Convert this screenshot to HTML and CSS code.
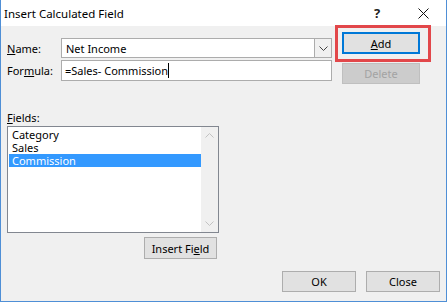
FILE: index.html
```html
<!DOCTYPE html>
<html>
<head>
    <title>Insert Calculated Field</title>
    <link rel="stylesheet" href="styles.css">
</head>
<body>
    <div class="window">
        <div class="titlebar">
            <span class="title">Insert Calculated Field</span>
            <span class="caption-btn help">?</span>
            <span class="caption-btn">
                <svg width="11" height="11" viewBox="0 0 11 11">
                    <path d="M0.5 0.5 L10.5 10.5 M10.5 0.5 L0.5 10.5" stroke="#111" stroke-width="1" fill="none"/>
                </svg>
            </span>
        </div>

        <div class="content">
            <div class="top">
                <div class="fields-col">
                    <div class="row">
                        <label class="label"><u>N</u>ame:</label>
                        <div class="combo">
                            <span class="combo-text">Net Income</span>
                            <span class="combo-btn">
                                <svg width="9" height="5" viewBox="0 0 9 5">
                                    <path d="M0.5 0.5 L4.5 4.5 L8.5 0.5" stroke="#444" fill="none"/>
                                </svg>
                            </span>
                        </div>
                    </div>
                    <div class="row">
                        <label class="label">For<u>m</u>ula:</label>
                        <div class="textbox"><span class="caret">=Sales- Commission</span></div>
                    </div>
                </div>
                <div class="btn-col">
                    <button class="btn default"><u>A</u>dd</button>
                    <button class="btn disabled">Delete</button>
                </div>
            </div>

            <div class="list-section">
                <div class="list-label"><u>F</u>ields:</div>
                <div class="listbox">
                    <ul class="items">
                        <li>Category</li>
                        <li>Sales</li>
                        <li class="selected">Commission</li>
                    </ul>
                    <div class="scrollbar">
                        <svg width="9" height="5" viewBox="0 0 9 5">
                            <path d="M0.5 4.5 L4.5 0.5 L8.5 4.5" stroke="#c2c2c2" fill="none"/>
                        </svg>
                        <svg width="9" height="5" viewBox="0 0 9 5">
                            <path d="M0.5 0.5 L4.5 4.5 L8.5 0.5" stroke="#c2c2c2" fill="none"/>
                        </svg>
                    </div>
                </div>
                <button class="btn insert">Insert Fi<u>e</u>ld</button>
            </div>

            <div class="footer">
                <button class="btn">OK</button>
                <button class="btn">Close</button>
            </div>
        </div>

        <div class="highlight"></div>
    </div>
</body>
</html>
```

FILE: styles.css
```css
body {
  margin: 0;
  font-family: "Noto Sans", "Open Sans", sans-serif;
  font-size: 11px;
  color: #000;
  background: #f0f0f0;
}
.window {
  position: relative;
  width: 447px;
  height: 302px;
  box-sizing: border-box;
  border: 1px solid #4f8fd6;
  border-top: none;
  background: #f0f0f0;
  display: flex;
  flex-direction: column;
}
.titlebar {
  height: 26px;
  background: #fff;
  display: flex;
  align-items: stretch;
  padding-left: 3px;
  font-size: 11.5px;
}
.title {
  flex: 1;
  display: flex;
  align-items: center;
}
.caption-btn {
  width: 46px;
  display: flex;
  align-items: center;
  justify-content: center;
}
.help {
  font-size: 13px;
  font-weight: bold;
  color: #222;
}
.content {
  flex: 1;
  padding: 0 6px;
  display: flex;
  flex-direction: column;
}
.top {
  display: flex;
  align-items: flex-start;
}
.fields-col {
  margin-top: 12px;
  display: flex;
  flex-direction: column;
  gap: 2px;
}
.row {
  display: flex;
  align-items: center;
}
.label {
  width: 54px;
}
.combo {
  width: 271px;
  height: 20px;
  box-sizing: border-box;
  border: 1px solid #acacac;
  background: #fff;
  display: flex;
  align-items: center;
}
.combo-text {
  flex: 1;
  padding-left: 4px;
}
.combo-btn {
  width: 17px;
  height: 18px;
  box-sizing: border-box;
  border-left: 1px solid #acacac;
  background: #f0f0f0;
  display: flex;
  align-items: center;
  justify-content: center;
}
.textbox {
  width: 271px;
  height: 21px;
  box-sizing: border-box;
  border: 1px solid #acacac;
  background: #fff;
  display: flex;
  align-items: center;
  padding-left: 3px;
}
.caret {
  border-right: 1px solid #000;
  line-height: 15px;
}
.btn-col {
  margin-top: 6px;
  margin-left: 10px;
  display: flex;
  flex-direction: column;
  gap: 9px;
}
.btn {
  font-family: inherit;
  font-size: 11px;
  width: 78px;
  height: 22px;
  padding: 0;
  background: #e1e1e1;
  border: 1px solid #adadad;
  color: #000;
}
.btn.default {
  border: 2px solid #0078d7;
}
.btn.disabled {
  background: #cccccc;
  border-color: #bfbfbf;
  color: #a3a3a3;
  height: 21px;
}
.list-section {
  margin-top: 26px;
  display: flex;
  flex-direction: column;
}
.list-label {
  line-height: 16px;
}
.listbox {
  width: 212px;
  height: 107px;
  box-sizing: border-box;
  border: 1px solid #828790;
  background: #fff;
  display: flex;
}
.items {
  flex: 1;
  list-style: none;
  margin: 1px 0 0 1px;
  padding: 0;
}
.items li {
  height: 13px;
  line-height: 13px;
  padding-left: 3px;
}
.items li.selected {
  background: #3399ff;
  color: #fff;
}
.scrollbar {
  width: 17px;
  background: #f0f0f0;
  display: flex;
  flex-direction: column;
  align-items: center;
  justify-content: space-between;
  padding: 6px 0;
  box-sizing: border-box;
}
.btn.insert {
  width: 73px;
  margin-top: 4px;
  margin-left: 137px;
}
.footer {
  margin-top: 12px;
  display: flex;
  justify-content: flex-end;
  gap: 10px;
}
.footer .btn {
  width: 74px;
  height: 21px;
}
.highlight {
  position: absolute;
  left: 334px;
  top: 25px;
  width: 96px;
  height: 37px;
  box-sizing: border-box;
  border: 3px solid #e2474a;
}
```
